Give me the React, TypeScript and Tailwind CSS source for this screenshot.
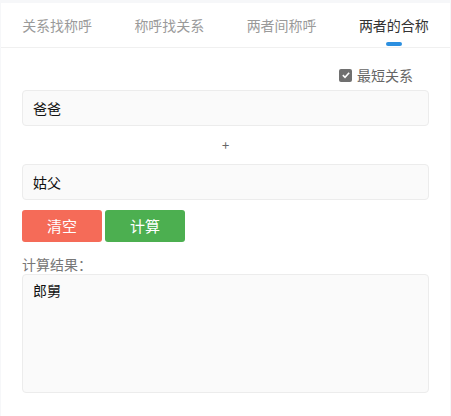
import React from 'react';

const tabs = ['关系找称呼', '称呼找关系', '两者间称呼', '两者的合称'];

export default function App() {
    return (
        <div
            className="w-[451px] h-[416px] bg-[#f6f7f9] pt-[3px] px-[1px] overflow-hidden"
            style={{ fontFamily: '"Noto Sans CJK SC", "Noto Sans", sans-serif' }}
        >
            <div className="bg-white h-full">
                <div className="grid grid-cols-4 h-[45px] border-b border-[#f0f0f0]">
                    {tabs.map((t, i) => (
                        <div key={t} className="relative flex items-center justify-center">
                            <span className={`text-[14px] ${i === 3 ? 'text-[#333]' : 'text-[#9a9a9a]'}`}>{t}</span>
                            {i === 3 && (
                                <span className="absolute bottom-[1px] left-1/2 -translate-x-1/2 w-[16px] h-[4px] rounded-full bg-[#2b8fe0]" />
                            )}
                        </div>
                    ))}
                </div>

                <div className="px-[21px] pt-[17px]">
                    <div className="flex justify-end items-center gap-[5px] pr-[16px] h-[20px] mb-[5px]">
                        <span className="w-[13px] h-[13px] rounded-[2px] bg-[#707070] flex items-center justify-center">
                            <svg viewBox="0 0 12 12" className="w-[10px] h-[10px]">
                                <path d="M2.2 6.2 L4.8 8.7 L9.8 3.3" fill="none" stroke="#fff" strokeWidth="1.9" />
                            </svg>
                        </span>
                        <span className="text-[14px] text-[#666]">最短关系</span>
                    </div>

                    <div className="h-[36px] bg-[#fafafa] border border-[#ececec] rounded-[4px] flex items-center px-[10px] text-[14px] text-[#111]">
                        爸爸
                    </div>
                    <div className="h-[38px] flex items-center justify-center text-[13px] text-[#666]">+</div>
                    <div className="h-[36px] bg-[#fafafa] border border-[#ececec] rounded-[4px] flex items-center px-[10px] text-[14px] text-[#111]">
                        姑父
                    </div>

                    <div className="flex gap-[3px] mt-[10px]">
                        <button className="w-[80px] h-[32px] rounded-[3px] bg-[#f56b58] text-white text-[15px]">清空</button>
                        <button className="w-[80px] h-[32px] rounded-[3px] bg-[#4caf50] text-white text-[15px]">计算</button>
                    </div>

                    <div className="mt-[12px] text-[14px] text-[#777] leading-[20px]">计算结果：</div>
                    <div className="h-[119px] bg-[#fafafa] border border-[#ececec] rounded-[4px] px-[10px] pt-[5px] text-[14px] text-[#111]">
                        郎舅
                    </div>
                </div>
            </div>
        </div>
    );
}
